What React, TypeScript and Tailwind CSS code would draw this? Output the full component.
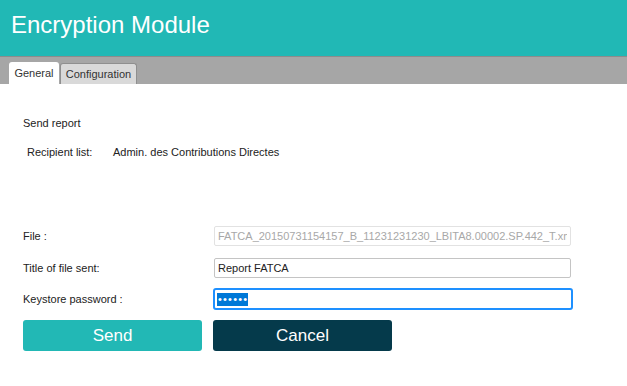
import { useState } from "react";

const font = { fontFamily: '"Liberation Sans", Arial, sans-serif' };

export default function App() {
  const [tab, setTab] = useState("general");
  const [title, setTitle] = useState("Report FATCA");
  const [password, setPassword] = useState("secret");

  return (
    <div className="h-[386px] w-[627px] bg-white text-[#222]" style={font}>
      <header className="h-[56px] bg-[#21b8b5] pl-[11px] pt-[10px]">
        <h1 className="text-[24px] leading-[30px] text-white">Encryption Module</h1>
      </header>

      <nav className="flex h-[28px] items-end gap-px border-t border-[#8c8c8c] bg-[#a6a6a6] pl-[9px]">
        <button
          onClick={() => setTab("general")}
          className={
            tab === "general"
              ? "h-[22px] w-[50px] rounded-t-[3px] bg-white text-[11px] text-[#333]"
              : "h-[21px] w-[50px] rounded-t-[3px] border border-b-0 border-[#8f8f8f] bg-[#d9d9d9] text-[11px] text-[#333]"
          }
        >
          General
        </button>
        <button
          onClick={() => setTab("configuration")}
          className={
            tab === "configuration"
              ? "h-[22px] w-[77px] rounded-t-[3px] bg-white text-[11px] text-[#333]"
              : "h-[21px] w-[77px] rounded-t-[3px] border border-b-0 border-[#8f8f8f] bg-[#d9d9d9] text-[11px] text-[#333]"
          }
        >
          Configuration
        </button>
      </nav>

      <main className="px-[23px] text-[11px]">
        <p className="pt-[31px]">Send report</p>
        <div className="mt-[12px] flex pl-[4px]">
          <span className="w-[86px]">Recipient list:</span>
          <span>Admin. des Contributions Directes</span>
        </div>

        <div className="mt-[66px] flex flex-col gap-[12px]">
          <label className="flex items-center">
            <span className="w-[191px]">File :</span>
            <input
              disabled
              value="FATCA_20150731154157_B_11231231230_LBITA8.00002.SP.442_T.xml"
              className="h-[20px] w-[357px] rounded-[2px] border border-[#e2e2e2] bg-white px-[3px] text-[11px] text-[#a8a8a8] outline-none"
            />
          </label>
          <label className="flex items-center">
            <span className="w-[191px]">Title of file sent:</span>
            <input
              value={title}
              onChange={(e) => setTitle(e.target.value)}
              className="h-[20px] w-[357px] rounded-[2px] border border-[#c4c4c4] bg-white px-[3px] text-[11px] text-[#222] outline-none"
            />
          </label>
          <label className="-mt-[2px] flex items-center">
            <span className="w-[190px]">Keystore password :</span>
            <div className="flex h-[22px] w-[360px] items-center rounded-[3px] border-2 border-[#1e90ff] bg-white px-[2px]">
              <span className="bg-[#0078d7] pl-px text-[11px] leading-[13px] tracking-[1.2px] text-white">
                {"\u2022".repeat(password.length)}
              </span>
            </div>
          </label>
        </div>

        <div className="mt-[10px] flex gap-[11px]">
          <button className="h-[31px] w-[179px] rounded-[3px] bg-[#22b8b5] text-[17px] text-white">
            Send
          </button>
          <button
            onClick={() => setPassword("")}
            className="h-[31px] w-[179px] rounded-[3px] bg-[#053a4b] text-[17px] text-white"
          >
            Cancel
          </button>
        </div>
      </main>
    </div>
  );
}
